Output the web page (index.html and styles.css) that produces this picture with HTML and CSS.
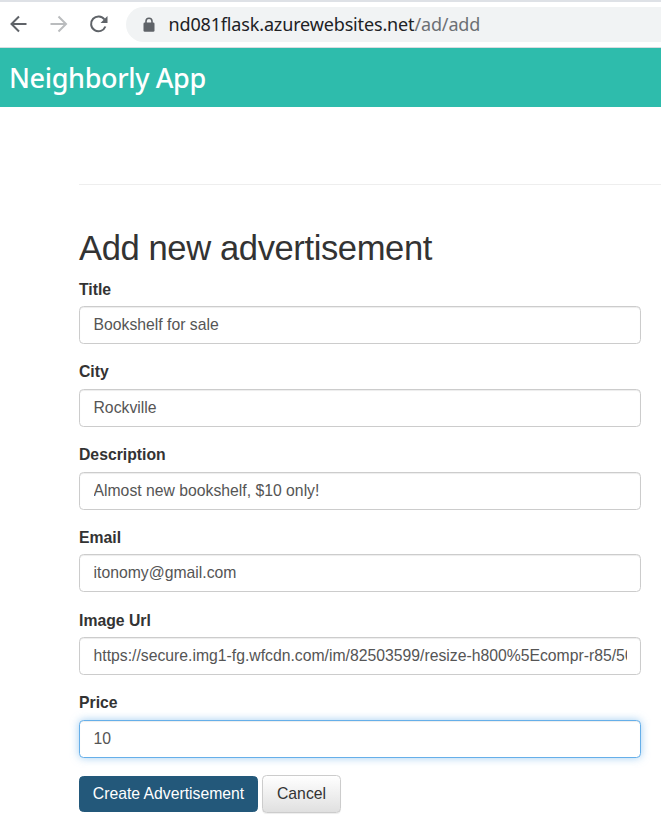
FILE: index.html
```html
<!DOCTYPE html>
<html lang="en">
<head>
<meta charset="utf-8">
<title>Neighborly App</title>
<link rel="stylesheet" href="styles.css">
</head>
<body>
<div class="browser">
  <svg class="nav-icons" width="126" height="40" viewBox="0 0 126 40" fill="none" stroke-width="2">
    <path class="back" d="M26.500 17H12M19 9.500L11.500 17L19 24.500"/>
    <path class="forward" d="M50.500 17H65M58.500 9.500L66 17L58.500 24.500"/>
    <path class="reload" d="M104.500 12.500A7.400 7.400 0 1 0 105.400 19.500"/>
    <path class="reload-tip" d="M107.500 9V16H100.500Z"/>
  </svg>
  <div class="address">
    <svg class="lock" width="12" height="16" viewBox="0 0 12 16">
      <path d="M3 6V4.300a3 3 0 0 1 6 0V6" fill="none" stroke="#5f6368" stroke-width="1.600"/>
      <rect x=".5" y="5.500" width="11" height="9.300" rx="1.300" fill="#5f6368"/>
    </svg>
    <span class="url">nd081flask.azurewebsites.net<span class="path">/ad/add</span></span>
  </div>
</div>
<header class="navbar"><span class="brand">Neighborly App</span></header>
<main class="content">
  <hr>
  <h2>Add new advertisement</h2>
  <form>
    <div class="group"><label for="title">Title</label><input id="title" value="Bookshelf for sale"></div>
    <div class="group"><label for="city">City</label><input id="city" value="Rockville"></div>
    <div class="group"><label for="description">Description</label><input id="description" value="Almost new bookshelf, $10 only!"></div>
    <div class="group"><label for="email">Email</label><input id="email" value="itonomy@gmail.com"></div>
    <div class="group"><label for="image">Image Url</label><input id="image" value="https://secure.img1-fg.wfcdn.com/im/82503599/resize-h800%5Ecompr-r85/5000/50001234/bookshelf.jpg"></div>
    <div class="group"><label for="price">Price</label><input id="price" class="focused" value="10"></div>
    <div class="actions">
      <button type="button" class="btn primary">Create Advertisement</button>
      <button type="button" class="btn cancel">Cancel</button>
    </div>
  </form>
</main>
</body>
</html>
```
FILE: styles.css
```css
* { box-sizing: border-box; }
body {
  margin: 0;
  height: 821px;
  overflow: hidden;
  background: #fff;
  color: #333;
  font-family: "Liberation Sans", Arial, sans-serif;
  font-size: 15.75px;
}
.browser {
  display: flex;
  height: 48px;
  padding-top: 5px;
  border-top: 2px solid #dee1e6;
  border-bottom: 1px solid #dadce0;
}
.nav-icons { flex: none; }
.back, .reload { stroke: #5f6368; }
.forward { stroke: #babcbe; }
.reload-tip { fill: #5f6368; }
.address {
  flex: 1;
  display: flex;
  align-items: center;
  height: 35px;
  padding-left: 17px;
  border-radius: 18px 0 0 18px;
  background: #f1f3f4;
}
.lock { flex: none; margin-right: 13.500px; }
.url {
  padding-bottom: 2px;
  color: #202124;
  font-family: "Noto Sans", sans-serif;
  font-size: 18px;
  letter-spacing: -.15px;
  white-space: nowrap;
}
.path { color: #6c7074; }
.navbar {
  display: flex;
  align-items: center;
  height: 59px;
  padding-left: 9px;
  background: #2ebcac;
}
.brand {
  color: #fff;
  font-family: "Noto Sans", sans-serif;
  font-size: 27px;
  font-weight: 500;
  letter-spacing: -.35px;
  white-space: nowrap;
}
.content { padding-left: 79px; }
hr {
  height: 1px;
  margin: 77px 0 0;
  border: 0;
  background: #eee;
}
h2 {
  margin: 44px 0 0;
  font-size: 34.6px;
  font-weight: 400;
  line-height: 38px;
  letter-spacing: -.4px;
}
form { width: 562px; padding-top: 12.5px; }
.group { height: 82.8px; }
label {
  display: block;
  height: 26.6px;
  font-weight: 700;
  line-height: 20px;
}
input {
  display: block;
  width: 100%;
  height: 38px;
  padding: 0 13.500px;
  border: 1px solid #ccc;
  border-radius: 4.500px;
  outline: 0;
  color: #555;
  background: #fff;
  font: inherit;
  box-shadow: inset 0 1px 1px rgba(0, 0, 0, .075);
}
.focused {
  border-color: #66afe9;
  box-shadow: inset 0 1px 1px rgba(0, 0, 0, .075), 0 0 9px rgba(102, 175, 233, .6);
}
.actions { display: flex; align-items: center; gap: 4px; height: 38px; margin-top: -1px; }
.btn {
  height: 38px;
  padding: 0;
  border: 1px solid #ccc;
  border-radius: 4.500px;
  font: inherit;
  white-space: nowrap;
}
.primary { width: 179px; height: 36px; border-color: #23587a; background: #23587a; color: #fff; }
.cancel {
  width: 79px;
  color: #333;
  background: linear-gradient(#fff, #e0e0e0);
  box-shadow: 0 1px 1px rgba(0, 0, 0, .075);
}
```
